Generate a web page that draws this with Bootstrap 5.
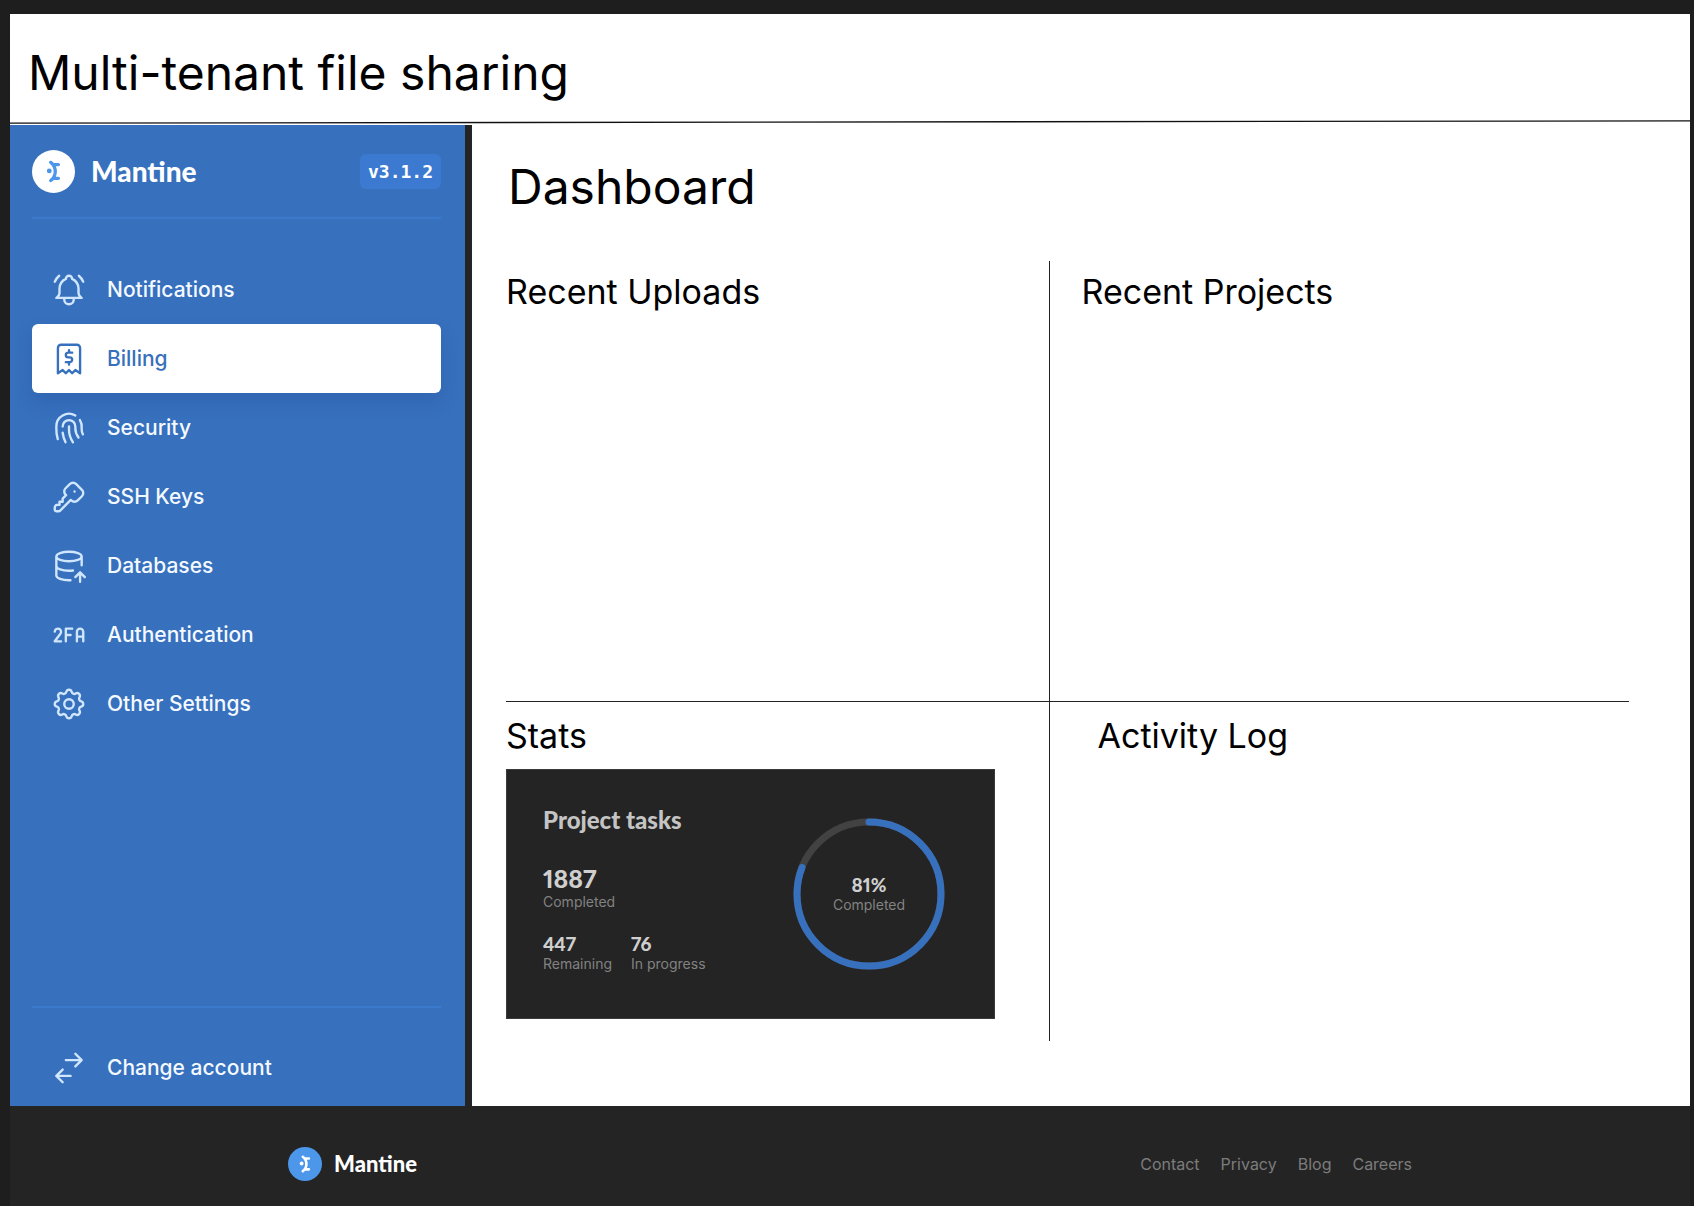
<!DOCTYPE html>
<html lang="en">
<head>
<meta charset="utf-8">
<meta name="viewport" content="width=device-width, initial-scale=1">
<title>Multi-tenant file sharing</title>
<link href="https://cdn.jsdelivr.net/npm/bootstrap@5.3.0/dist/css/bootstrap.min.css" rel="stylesheet">
<style>
  body { background: #1e1e1e; font-family: Inter, "Liberation Sans", sans-serif; color: #000; }
  .app-shell { min-height: 100vh; padding: 14px 4px 0 10px; }
  .site-title, .page-title { font-size: 48px; line-height: 64px; font-weight: 400; }
  .site-title { padding: 27px 18px 15px; }
  .section-title { font-size: 34px; line-height: 44px; font-weight: 400; }
  .rule-line { display: block; width: 100%; height: 5px; }
  .side-panel { width: 462px; flex: none; background: #3770bd; border-right: 7px solid #242424; padding: 0 24px 4px 22px; }
  .brand-row { padding: 25px 0 24px; border-bottom: 2px solid #3b79cd; margin-bottom: 36px; }
  .brand-name { font-family: Lato, sans-serif; font-weight: 900; font-size: 28px; line-height: 43px; color: #fff; }
  .version-tag { background: #3b7ad0; color: #fff; font: 700 18px/35px "DejaVu Sans Mono", monospace; padding: 0 8px; border-radius: 6px; }
  .side-link { height: 69px; padding: 0 18px; gap: 19px; border-radius: 6px; font-size: 21px; font-weight: 500; color: #f4f9ff; }
  .side-link svg { width: 38px; height: 38px; fill: none; stroke: #cfe6fd; stroke-width: 1.5; stroke-linecap: round; stroke-linejoin: round; }
  .side-link:hover { color: #fff; }
  .side-link.active { background: #fff; color: #3770bd; box-shadow: 0 9px 18px rgba(25, 60, 130, .2); }
  .side-link.active svg { stroke: #3770bd; }
  .account-row { border-top: 2px solid #3b79cd; padding-top: 25px; }
  .main-area { padding: 30px 61px 65px 34px; }
  .page-title { padding-left: 2px; margin-bottom: 42px; }
  .board { display: grid; grid-template-columns: 544fr 580fr; grid-template-rows: 441px 1fr; }
  .cell-left { border-right: 1px solid #222; }
  .cell-top { border-bottom: 1px solid #222; padding-top: 9px; }
  .cell-bottom { padding-top: 12px; }
  .task-card { width: 489px; max-width: 100%; height: 250px; background: #242424; border: 1px solid #3a3a3a; padding: 0 49px 0 36px; margin-top: 11px; }
  .task-title { font: 900 24px/28px Lato, sans-serif; color: #c4c4c4; margin-bottom: 30px; }
  .num-lg, .num-md { color: #cfcfcf; font-variant-numeric: proportional-nums; }
  .num-lg { font: 900 25px/28px Lato, sans-serif; font-variant-numeric: proportional-nums; }
  .num-md { font: 900 19px/20px Lato, sans-serif; font-variant-numeric: proportional-nums; }
  .caption-text { font-size: 14px; line-height: 19px; color: #828282; }
  .stat-pair { gap: 19px; margin-top: 23px; }
  .task-figures { padding-bottom: 10px; }
  .ring-box { display: grid; place-items: center; }
  .ring-box > * { grid-area: 1 / 1; }
  .site-footer { height: 100px; background: #242424; }
  .footer-inner { width: 100%; max-width: 1124px; margin: 0 auto; }
  .footer-name { font: 900 22px/34px Lato, sans-serif; color: #fff; }
  .footer-nav { gap: 21px; }
  .footer-link { font-size: 16px; color: #7c7c7c; text-decoration: none; }
</style>
</head>
<body>
<svg class="d-none" aria-hidden="true">
  <symbol id="mark" viewBox="0 0 163 163"><path d="M65.983 43.049a6.234 6.234 0 00-.336 6.884 6.14 6.14 0 001.618 1.786c9.444 7.036 14.866 17.794 14.866 29.52 0 11.726-5.422 22.484-14.866 29.52a6.145 6.145 0 00-1.616 1.786 6.21 6.21 0 00-.694 4.693 6.21 6.21 0 001.028 2.186 6.151 6.151 0 006.457 2.319 6.154 6.154 0 002.177-1.035 50.083 50.083 0 007.947-7.39h17.493c3.406 0 6.174-2.772 6.174-6.194s-2.762-6.194-6.174-6.194h-9.655a49.165 49.165 0 004.071-19.69 49.167 49.167 0 00-4.07-19.692h9.66c3.406 0 6.173-2.771 6.173-6.194 0-3.422-2.762-6.193-6.173-6.193H82.574a50.112 50.112 0 00-7.952-7.397 6.15 6.15 0 00-4.578-1.153 6.189 6.189 0 00-4.055 2.438z"/><circle cx="65.4" cy="79.2" r="9.2"/></symbol>
</svg>
<div class="app-shell d-flex flex-column">
  <header class="bg-white">
    <h1 class="site-title m-0">Multi-tenant file sharing</h1>
    <svg class="rule-line" viewBox="0 0 1680 5" preserveAspectRatio="none" aria-hidden="true"><path d="M0 3.2L1680 .8" stroke="#111" stroke-width="1.3"/></svg>
  </header>
  <div class="d-flex flex-grow-1 bg-white">
    <aside class="side-panel d-flex flex-column">
      <div class="brand-row d-flex align-items-center">
        <svg width="43" height="43" role="img" aria-label="Mantine logo"><circle cx="21.5" cy="21.5" r="21.5" fill="#fff"/><use href="#mark" width="43" height="43" fill="#4c97ea"/></svg>
        <span class="brand-name ms-3">Mantine</span>
        <span class="version-tag ms-auto">v3.1.2</span>
      </div>
      <nav class="nav flex-column" aria-label="Settings">
        <a class="side-link nav-link d-flex align-items-center" href="#"><svg viewBox="0 0 24 24"><path d="M10 5a2 2 0 0 1 4 0a7 7 0 0 1 4 6v3a4 4 0 0 0 2 3h-16a4 4 0 0 0 2 -3v-3a7 7 0 0 1 4 -6M9 17v1a3 3 0 0 0 6 0v-1M21 6.727a11.05 11.05 0 0 0 -2.794 -3.727M3 6.727a11.05 11.05 0 0 1 2.792 -3.727"/></svg>Notifications</a>
        <a class="side-link nav-link active d-flex align-items-center" href="#" aria-current="page"><svg viewBox="0 0 24 24"><path d="M5 21v-16a2 2 0 0 1 2 -2h10a2 2 0 0 1 2 2v16l-3 -2l-2 2l-2 -2l-2 2l-2 -2l-3 2M14 8h-2.5a1.5 1.5 0 0 0 0 3h1a1.5 1.5 0 0 1 0 3h-2.5m2 0v1.5m0 -9v1.5"/></svg>Billing</a>
        <a class="side-link nav-link d-flex align-items-center" href="#"><svg viewBox="0 0 24 24"><path d="M18.9 7a8 8 0 0 1 1.1 5v1a6 6 0 0 0 .8 3M8 11a4 4 0 0 1 8 0v1a10 10 0 0 0 2 6M12 11v2a14 14 0 0 0 2.5 8M8 15a18 18 0 0 0 1.8 6M4.9 19a22 22 0 0 1 -.9 -7v-1a8 8 0 0 1 12 -6.95"/></svg>Security</a>
        <a class="side-link nav-link d-flex align-items-center" href="#"><svg viewBox="0 0 24 24"><path d="M16.555 3.843l3.602 3.602a2.877 2.877 0 0 1 0 4.069l-2.643 2.643a2.877 2.877 0 0 1 -4.069 0l-.301 -.301l-6.558 6.558a2 2 0 0 1 -1.239 .578l-.175 .008h-1.172a1 1 0 0 1 -.993 -.883l-.007 -.117v-1.172a2 2 0 0 1 .467 -1.284l.119 -.13l.414 -.414h2v-2h2v-2l2.144 -2.144l-.301 -.301a2.877 2.877 0 0 1 0 -4.069l2.643 -2.643a2.877 2.877 0 0 1 4.069 0zM15.5 8.5h.01"/></svg>SSH Keys</a>
        <a class="side-link nav-link d-flex align-items-center" href="#"><svg viewBox="0 0 24 24"><path d="M4 6c0 1.657 3.582 3 8 3s8 -1.343 8 -3s-3.582 -3 -8 -3s-8 1.343 -8 3M4 6v6c0 1.657 3.582 3 8 3c.9 0 1.7 -.06 2.5 -.15M20 11.500v-5.500M4 12v6c0 1.657 3.582 3 8 3h.9M19 22v-6M22 19l-3 -3l-3 3"/></svg>Databases</a>
        <a class="side-link nav-link d-flex align-items-center" href="#"><svg viewBox="0 0 24 24"><path d="M7 16h-4l3.47 -4.66a2 2 0 1 0 -3.47 -1.54M10 16v-8h4M10 12h3M17 16v-6a2 2 0 0 1 4 0v6M17 13h4"/></svg>Authentication</a>
        <a class="side-link nav-link d-flex align-items-center" href="#"><svg viewBox="0 0 24 24"><path d="M10.325 4.317c.426 -1.756 2.924 -1.756 3.35 0a1.724 1.724 0 0 0 2.573 1.066c1.543 -.94 3.31 .826 2.37 2.37a1.724 1.724 0 0 0 1.065 2.572c1.756 .426 1.756 2.924 0 3.35a1.724 1.724 0 0 0 -1.066 2.573c.94 1.543 -.826 3.31 -2.37 2.37a1.724 1.724 0 0 0 -2.572 1.065c-.426 1.756 -2.924 1.756 -3.35 0a1.724 1.724 0 0 0 -2.573 -1.066c-1.543 .94 -3.31 -.826 -2.37 -2.37a1.724 1.724 0 0 0 -1.065 -2.572c-1.756 -.426 -1.756 -2.924 0 -3.35a1.724 1.724 0 0 0 1.066 -2.573c-.94 -1.543 .826 -3.31 2.37 -2.37c1 .608 2.296 .07 2.572 -1.065z"/><circle cx="12" cy="12" r="3"/></svg>Other Settings</a>
      </nav>
      <div class="account-row mt-auto">
        <a class="side-link nav-link d-flex align-items-center" href="#"><svg viewBox="0 0 24 24"><path d="M16 3l4 4l-4 4M10 7h10M8 13l-4 4l4 4M4 17h9"/></svg>Change account</a>
      </div>
    </aside>
    <main class="main-area d-flex flex-column flex-grow-1">
      <h2 class="page-title mt-0">Dashboard</h2>
      <div class="board flex-grow-1">
        <section class="cell-left cell-top"><h3 class="section-title m-0">Recent Uploads</h3></section>
        <section class="cell-top ps-4"><h3 class="section-title my-0 ms-2">Recent Projects</h3></section>
        <section class="cell-left cell-bottom">
          <h3 class="section-title m-0">Stats</h3>
          <div class="task-card d-flex align-items-center justify-content-between">
            <div class="task-figures">
              <h4 class="task-title mt-0">Project tasks</h4>
              <div class="num-lg">1887</div>
              <div class="caption-text">Completed</div>
              <div class="stat-pair d-flex">
                <div><div class="num-md">447</div><div class="caption-text">Remaining</div></div>
                <div><div class="num-md">76</div><div class="caption-text">In progress</div></div>
              </div>
            </div>
            <div class="ring-box">
              <svg width="152" height="152" viewBox="0 0 152 152" fill="none" stroke-width="7" role="img" aria-label="81% completed">
                <circle cx="76" cy="76" r="72" stroke="#424242"/>
                <circle cx="76" cy="76" r="72" stroke="#3770bd" stroke-linecap="round" pathLength="100" stroke-dasharray="81 19" transform="rotate(-90 76 76)"/>
              </svg>
              <div class="text-center"><div class="num-md">81%</div><div class="caption-text">Completed</div></div>
            </div>
          </div>
        </section>
        <section class="cell-bottom ps-5"><h3 class="section-title m-0">Activity Log</h3></section>
      </div>
    </main>
  </div>
  <footer class="site-footer d-flex align-items-center">
    <div class="footer-inner d-flex align-items-center justify-content-between pt-3">
      <div class="d-flex align-items-center gap-2">
        <svg width="34" height="34" role="img" aria-label="Mantine logo"><circle cx="17" cy="17" r="17" fill="#4c97ea"/><use href="#mark" width="34" height="34" fill="#fff"/></svg>
        <span class="footer-name ms-1">Mantine</span>
      </div>
      <nav class="footer-nav d-flex" aria-label="Footer">
        <a class="footer-link" href="#">Contact</a><a class="footer-link" href="#">Privacy</a><a class="footer-link" href="#">Blog</a><a class="footer-link" href="#">Careers</a>
      </nav>
    </div>
  </footer>
</div>
<script src="https://cdn.jsdelivr.net/npm/bootstrap@5.3.0/dist/js/bootstrap.bundle.min.js"></script>
</body>
</html>
